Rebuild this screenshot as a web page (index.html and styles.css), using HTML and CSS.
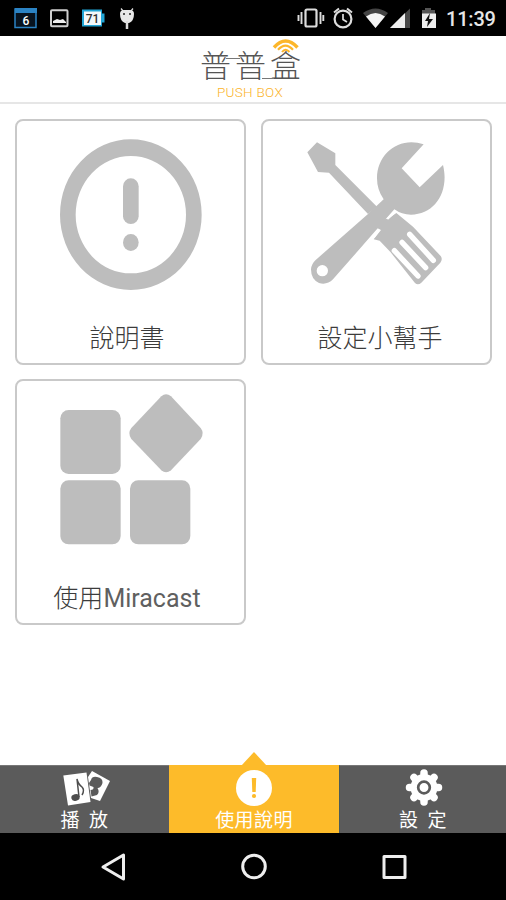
FILE: index.html
```html
<!DOCTYPE html>
<html lang="zh-Hant">
<head>
<meta charset="utf-8">
<title>普普盒</title>
<link rel="stylesheet" href="styles.css">
</head>
<body>
<div class="screen">
  <div class="status">
    <svg class="notices" viewBox="0 0 253 36">
      <rect x="15" y="9" width="21" height="18.500" fill="#07131f" stroke="#2b83c4" stroke-width="1.500"/>
      <rect x="15" y="8" width="22" height="5" fill="#2b83c4"/>
      <text x="26" y="25" class="day">6</text>
      <rect x="51" y="10.200" width="16.500" height="16" rx="1" fill="none" stroke="#cfcfcf" stroke-width="2"/>
      <path d="M53 23v-2l4-2 3 1 3-1 3 3v1z" fill="#eee"/>
      <path d="M82 9.500h20v4h2.500v9H102v4H82z" fill="#22a5d5"/>
      <rect x="84" y="11.500" width="17" height="13.500" fill="#f4f8fa"/>
      <text x="92.500" y="22.500" class="level">71</text>
      <path d="M121 8.500l2.500 3M133 8.500l-2.500 3" stroke="#ddd" stroke-width="1.200"/>
      <path d="M120 14q0-4 4-4h6q4 0 4 4 0 7-5 9h-4q-5-2-5-9z" fill="#e8e8e8"/>
      <path d="M127 21v8" stroke="#ddd" stroke-width="2.500"/>
      <circle cx="124" cy="14" r="1" fill="#222"/><circle cx="130" cy="14" r="1" fill="#222"/>
    </svg>
    <svg class="indicators" viewBox="253 0 190 36">
      <rect x="305.500" y="9.500" width="11" height="17" rx="1.500" fill="none" stroke="#ddd" stroke-width="2.200"/>
      <path d="M301.500 12v12M298.500 15v6M320.500 12v12M323.300 15v6" stroke="#ddd" stroke-width="1.900"/>
      <circle cx="343" cy="19" r="8.400" fill="none" stroke="#ddd" stroke-width="2.200"/>
      <path d="M343 14v5.500l4 2.500" fill="none" stroke="#ddd" stroke-width="1.700"/>
      <path d="M334 12.500l5-4M352 12.500l-5-4" stroke="#ddd" stroke-width="2"/>
      <path d="M363 13q12.500-9 25 0L375.500 28z" fill="#444"/>
      <path d="M366 16.500q9.500-7 19 0L375.500 28z" fill="#f4f4f4"/>
      <path d="M410 8.500V28h-20z" fill="#484848"/>
      <path d="M405 13v15h-15z" fill="#eee"/>
      <path d="M422 10h3V8h6v2h4v4h-13z" fill="#555"/>
      <path d="M422 13.500h14V28h-14z" fill="#eee"/>
      <path d="M430 13l-5 8h3l-1 6 6-8h-4z" fill="#111"/>
    </svg>
    <span class="clock">11:39</span>
  </div>

  <header class="header">
    <div class="logo">
      <div class="wordmark"><span>普</span><span>普</span><span>盒</span></div>
      <div class="tagline">PUSH BOX</div>
      <svg class="logo-lines" viewBox="180 36 150 66">
        <path d="M226 58.500h14M262 78.500h12" fill="none" stroke="#777" stroke-width="1"/>
        <g fill="none" stroke="#fcb62a" stroke-width="3.400">
          <path d="M274 47.500Q285.500 34.500 297.500 47.500"/>
          <path d="M278 49.800Q285.500 41.500 293 49.800" stroke-width="2.200"/>
          <path d="M282 52Q285.500 47.500 289.500 52" stroke-width="2"/>
        </g>
      </svg>
    </div>
  </header>

  <main class="grid">
    <section class="card">
      <svg class="art" viewBox="51 33 681 570" fill="#bdbdbd">
        <path fill-rule="evenodd" d="M180 314a212.500 226 0 1 0 425 0a212.500 226 0 1 0-425 0zM227 314a165.500 176 0 1 1 331 0a165.500 176 0 1 1-331 0z"/>
        <rect x="369" y="205" width="47" height="137" rx="23.500"/>
        <ellipse cx="392.500" cy="397.500" rx="23.500" ry="25.500"/>
      </svg>
      <h2 class="label shift-left">說明書</h2>
    </section>
    <section class="card">
      <svg class="art" viewBox="30 33 681 570" fill="#bdbdbd">
        <path d="M192 97L163 127L195 186L228 188L345 312L372 290L247 165V130z"/>
        <path d="M512 103L446 175L500 232L570 165C590 245 545 314 474 314Q446 314 424 298L240 508Q222 526 198 519Q174 508 174 478Q175 462 188 450L345 312L392 268Q372 240 372 205C372 130 440 78 512 103z"/>
        <path d="M378 330L404 326L430 309L480 350L563 438Q570 448 562 458L505 518Q495 527 486 519L413 427L380 392L362 388L384 360L365 350z"/>
        <path d="M430 303L403 327M379 359L362 382" stroke="#fff" stroke-width="6"/>
        <path d="M470 373L541 451M447 397L518 473M424 422L495 498" stroke="#fff" stroke-width="16" stroke-linecap="round"/>
        <circle cx="208" cy="482" r="17" fill="#fff"/>
      </svg>
      <h2 class="label shift-right">設定小幫手</h2>
    </section>
    <section class="card">
      <svg class="art" viewBox="51 27 681 570" fill="#bdbdbd">
        <rect x="181" y="114" width="181" height="192" rx="25"/>
        <rect x="181" y="325" width="181" height="192" rx="25"/>
        <rect x="390" y="325" width="181" height="192" rx="25"/>
        <path d="M484 73Q498 60 513 73L602 168Q614 184 602 201L513 295Q498 307 484 295L394 201Q382 184 394 168z"/>
      </svg>
      <h2 class="label shift-left">使用<span class="latin">Miracast</span></h2>
    </section>
  </main>

  <nav class="tabs">
    <div class="tab">
      <svg class="tab-icon" viewBox="58 767 54 42">
        <path d="M63.300 776.500L86.500 773.500L90.500 803L68 806.500z" fill="#fff"/>
        <path d="M88 778L92 772L110 782L100 802L91 799z" fill="#fff"/>
        <path d="M91 781Q92 777 97 778Q103 779 102.500 784Q101 789 97.500 789Q100 793 97 796L91.500 797.500L90.500 791Q94 791 93.500 788L89.500 786.500L89 784z" fill="#5b5b5b"/>
        <ellipse cx="75.500" cy="798.500" rx="4.200" ry="3.300" transform="rotate(-15 75.500 798.500)" fill="#4d4d4d"/>
        <path d="M79 798L77 780Q78 785 82 788Q85 791 82 796" fill="none" stroke="#4d4d4d" stroke-width="1.500"/>
      </svg>
      <span class="tab-label">播<i></i>放</span>
    </div>
    <div class="tab active">
      <svg class="tab-icon" viewBox="227 767 54 42">
        <circle cx="254" cy="789" r="18" fill="#fff"/>
        <path d="M251.800 779h4.400l-.5 14h-3.400z" fill="#fdbb2a"/>
        <circle cx="254" cy="797" r="2.100" fill="#fdbb2a"/>
      </svg>
      <span class="tab-label">使用說明</span>
    </div>
    <div class="tab">
      <svg class="tab-icon" viewBox="396 767 54 42">
        <g stroke="#fff" stroke-width="7.500" stroke-linecap="round">
          <path d="M424 774v29M409.500 788.500h29M414 778.500l20 20M434 778.500l-20 20"/>
        </g>
        <circle cx="424" cy="788.500" r="13.500" fill="#fff"/>
        <circle cx="424" cy="788.500" r="5.800" fill="#fff" stroke="#5b5b5b" stroke-width="2.700"/>
      </svg>
      <span class="tab-label">設<i></i>定</span>
    </div>
  </nav>

  <div class="softkeys">
    <svg class="keys" viewBox="0 833 506 67" fill="none" stroke="#eee" stroke-width="3" stroke-linejoin="round">
      <path d="M103 867L123.500 855V879z"/>
      <circle cx="254" cy="866.500" r="11.300"/>
      <rect x="384" y="856.500" width="21" height="21"/>
    </svg>
  </div>
</div>
</body>
</html>
```
FILE: styles.css
```css
* { box-sizing: border-box; }
body { margin: 0; background: #fff; font-family: Roboto, "Noto Sans CJK TC", sans-serif; }
.screen { width: 506px; height: 900px; display: flex; flex-direction: column; overflow: hidden; }

.status { height: 36px; flex: none; background: #000; display: flex; align-items: center; }
.notices { width: 253px; height: 36px; }
.indicators { width: 190px; height: 36px; }
.day { font: 500 12px Roboto, sans-serif; fill: #fff; text-anchor: middle; }
.level { font: 500 12px Roboto, sans-serif; fill: #333; text-anchor: middle; }
.clock { margin-left: 3px; padding-top: 2px; color: #e6e6e6; font-size: 20px; font-weight: 500; line-height: 34px; letter-spacing: -0.2px; }

.header { height: 68px; flex: none; border-bottom: 2px solid #e6e6e6; display: flex; }
.logo { position: relative; width: 150px; height: 66px; margin-left: 180px; }
.wordmark { display: flex; gap: 4px; padding: 15px 0 0 20px; font-size: 31px; font-weight: 300; line-height: 31px; color: #555; }
.wordmark span { width: 31px; }
.tagline { padding: 0 0 0 37px; color: #fbb42c; font: 300 13.5px/20px Roboto, sans-serif; letter-spacing: 0.3px; white-space: nowrap; }
.logo-lines { position: absolute; left: 0; top: 0; width: 150px; height: 66px; }

.grid { flex: 1; display: grid; grid-template-columns: 231px 231px; grid-auto-rows: 246px; gap: 14px 15px; padding: 15px 14px 0 15px; align-content: start; }
.card { border: 2px solid #c9c9c9; border-radius: 8px; display: flex; flex-direction: column; align-items: center; }
.art { width: 227px; height: 190px; flex: none; }
.label { margin: 8px 0 0; font-size: 25px; font-weight: 300; line-height: 40px; color: #3c3c3c; white-space: nowrap; }
.latin { font-weight: 400; color: #606060; }
.shift-left { padding-right: 7px; }
.shift-right { padding-left: 7px; }

.tabs { height: 68px; flex: none; display: flex; background: #5b5b5b; }
.tab { position: relative; width: 169px; flex: none; display: flex; flex-direction: column; align-items: center; border-top: 1px solid #777; }
.tab.active { width: 170px; background: #fdbb2a; border-color: #fdbb2a; }
.tab.active::before { content: ""; position: absolute; left: 50%; top: -14px; margin-left: -13px; border: solid transparent; border-width: 0 13px 14px; border-bottom-color: #fdbb2a; }
.tab:last-child { width: 167px; border-left: 1px solid #4a5a5a; }
.tab-icon { position: relative; width: 54px; height: 42px; flex: none; }
.tab-label { color: #fff; font-size: 19px; line-height: 24px; letter-spacing: 0.4px; margin-top: 1px; white-space: nowrap; }
.tab-label i { display: inline-block; width: 9px; }

.softkeys { height: 67px; flex: none; background: #000; }
.keys { display: block; width: 506px; height: 67px; }
```
